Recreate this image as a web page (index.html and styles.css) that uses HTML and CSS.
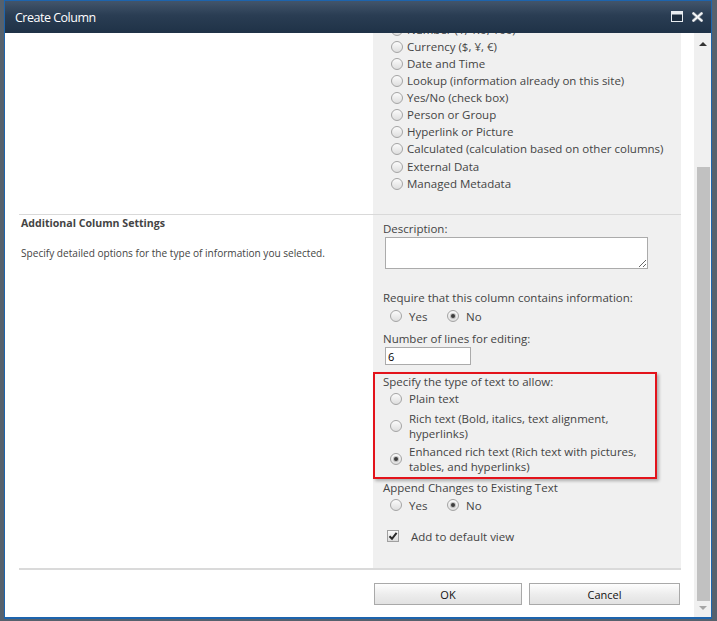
FILE: index.html
```html
<!DOCTYPE html>
<html lang="en">
<head>
<meta charset="utf-8">
<title>Create Column</title>
<link rel="stylesheet" href="styles.css">
</head>
<body>
<div class="dialog">
  <div class="titlebar">
    <span class="title">Create Column</span>
    <span class="tb-icons">
      <svg class="tb-max" width="12" height="11" viewBox="0 0 12 11"><rect x="0.5" y="0.5" width="11" height="10" fill="#1c2c3e" stroke="#e8ecf0"/><rect x="1" y="1" width="10" height="2.5" fill="#e8ecf0"/></svg>
      <svg class="tb-close" width="11" height="10" viewBox="0 0 11 10"><path d="M1.5 1.5 L9.5 8.5 M9.5 1.5 L1.5 8.5" stroke="#6d7884" stroke-width="3.6" stroke-linecap="square"/><path d="M1.5 1.5 L9.5 8.5 M9.5 1.5 L1.5 8.5" stroke="#f4f6f8" stroke-width="2" stroke-linecap="square"/></svg>
    </span>
  </div>
  <div class="body">
    <div class="content">
      <div class="section type-section">
        <div class="sec-left"></div>
        <div class="sec-right">
          <ul class="options">
            <li><input type="radio" class="radio" name="t">Number (1, 1.0, 100)</li>
            <li><input type="radio" class="radio" name="t">Currency ($, ¥, €)</li>
            <li><input type="radio" class="radio" name="t">Date and Time</li>
            <li><input type="radio" class="radio" name="t">Lookup (information already on this site)</li>
            <li><input type="radio" class="radio" name="t">Yes/No (check box)</li>
            <li><input type="radio" class="radio" name="t">Person or Group</li>
            <li><input type="radio" class="radio" name="t">Hyperlink or Picture</li>
            <li><input type="radio" class="radio" name="t">Calculated (calculation based on other columns)</li>
            <li class="gap"><input type="radio" class="radio" name="t">External Data</li>
            <li><input type="radio" class="radio" name="t">Managed Metadata</li>
          </ul>
        </div>
      </div>
      <div class="section settings">
        <div class="sec-left">
          <h3 class="sec-title">Additional Column Settings</h3>
          <p class="sec-desc">Specify detailed options for the type of information you selected.</p>
        </div>
        <div class="sec-right">
          <div class="label first">Description:</div>
          <textarea class="textarea"></textarea>
          <div class="label req">Require that this column contains information:</div>
          <div class="choice-row">
            <label class="choice"><input type="radio" class="radio" name="req">Yes</label>
            <label class="choice"><input type="radio" class="radio" name="req" checked>No</label>
          </div>
          <div class="label lines">Number of lines for editing:</div>
          <input type="text" class="textbox" value="6">
          <div class="highlight">
            <div class="label">Specify the type of text to allow:</div>
            <label class="opt opt-plain"><input type="radio" class="radio" name="tt"><span>Plain text</span></label>
            <label class="opt opt-rich"><input type="radio" class="radio" name="tt"><span>Rich text (Bold, italics, text alignment,<br>hyperlinks)</span></label>
            <label class="opt opt-enh"><input type="radio" class="radio" name="tt" checked><span>Enhanced rich text (Rich text with pictures,<br>tables, and hyperlinks)</span></label>
          </div>
          <div class="label append">Append Changes to Existing Text</div>
          <div class="choice-row append-row">
            <label class="choice"><input type="radio" class="radio" name="app">Yes</label>
            <label class="choice"><input type="radio" class="radio" name="app" checked>No</label>
          </div>
          <label class="check-row"><span class="checkbox"><svg width="10" height="10" viewBox="0 0 10 10"><path d="M1.5 5.2 L4 7.8 L8.6 1.8" fill="none" stroke="#2a2a2a" stroke-width="2"/></svg></span>Add to default view</label>
        </div>
      </div>
      <div class="footer">
        <button class="btn btn-ok">OK</button>
        <button class="btn btn-cancel">Cancel</button>
      </div>
    </div>
    <div class="scrollbar">
      <span class="arrow up"></span>
      <span class="thumb"></span>
      <span class="arrow down"></span>
    </div>
  </div>
</div>
</body>
</html>
```
FILE: styles.css
```css
* { box-sizing: border-box; }
html, body { margin: 0; padding: 0; }
body {
  background: #56616d;
  width: 717px;
  height: 621px;
  overflow: hidden;
  padding-left: 4px;
  font-family: "Open Sans", "Noto Sans", sans-serif;
  color: #444;
}
.dialog {
  width: 708px;
  height: 619px;
  border: 1px solid #1d64ad;
  border-bottom-width: 2px;
  background: #fff;
  display: flex;
  flex-direction: column;
  overflow: hidden;
}
.titlebar {
  height: 32px;
  flex: none;
  background: linear-gradient(#42556b, #2a3d53 45%, #1f3247);
  display: flex;
  align-items: center;
  justify-content: space-between;
  padding: 0 8px 0 10px;
}
.title {
  color: #fff;
  font-size: 12.5px;
  letter-spacing: -0.5px;
  padding-top: 1px;
}
.tb-icons { display: flex; align-items: center; gap: 9px; }
.tb-max { display: block; margin-top: -2px; }
.tb-close { display: block; margin-top: -1px; }
.body { flex: 1; display: flex; min-height: 0; }
.content {
  width: 689px;
  flex: none;
  overflow: hidden;
  padding-left: 14px;
}
.section {
  display: grid;
  grid-template-columns: 354px 308px;
}
.sec-right { background: #f0f0f0; }
.type-section {
  margin-top: -12px;
  border-bottom: 1px solid #d9d9d9;
  width: 662px;
}
.type-section .sec-right { padding: 0 0 22px 18px; }
.options { list-style: none; margin: 0; padding: 0; }
.options li {
  height: 17px;
  display: flex;
  align-items: center;
  font-size: 11.5px;
  white-space: nowrap;
}
.options li.gap { margin-top: 1px; }
.radio {
  appearance: none;
  -webkit-appearance: none;
  margin: 0 4px 0 0;
  width: 12px;
  height: 12px;
  flex: none;
  border-radius: 50%;
  border: 1px solid #a4a4a4;
  background: linear-gradient(#fbfbfb, #dedede);
  position: relative;
}
.radio:checked::after {
  content: "";
  position: absolute;
  left: 3px;
  top: 3px;
  width: 4px;
  height: 4px;
  border-radius: 50%;
  background: #3d3d3d;
  box-shadow: 0 0 0 1px rgba(60,60,60,0.25);
}
.settings .sec-left { padding-left: 2px; }
.sec-title {
  margin: 0;
  font-size: 10.6px;
  font-weight: bold;
  line-height: 16px;
  color: #444;
}
.sec-desc {
  margin: 14px 0 0;
  font-size: 10.1px;
  line-height: 16px;
}
.settings .sec-right { padding: 0 0 24px 10px; font-size: 11.5px; }
.label { line-height: 16px; white-space: nowrap; }
.label.first { margin-top: 6px; }
.textarea {
  display: block;
  margin: 0 0 0 2px;
  width: 263px;
  height: 32px;
  border: 1px solid #ababab;
  background: #fff;
  font: inherit;
}
.label.req { margin-top: 21px; }
.choice-row {
  margin-top: 2px;
  height: 16px;
  display: flex;
  align-items: center;
  padding-left: 7px;
}
.choice {
  display: inline-flex;
  align-items: center;
  width: 57px;
}
.choice .radio { margin-right: 7px; }
.label.lines { margin-top: 7px; }
.textbox {
  display: block;
  margin: 0 0 0 2px;
  width: 86px;
  height: 18px;
  border: 1px solid #ababab;
  padding: 0 2px;
  font: inherit;
  font-size: 11px;
  color: #000;
  background: #fff;
}
.highlight {
  margin: 7px 0 0 -10px;
  width: 284px;
  border: 2px solid #e3131b;
  box-shadow: 2px 2px 3px rgba(0,0,0,0.28);
  padding: 0 0 3.5px 8px;
}
.opt {
  display: flex;
  align-items: center;
  padding-left: 7px;
  line-height: 15px;
  white-space: nowrap;
}
.opt .radio { margin-right: 7px; }
.opt-plain { margin-top: 1px; line-height: 16px; }
.opt-rich { margin-top: 3.5px; }
.opt-enh { margin-top: 3px; }
.label.append { margin-top: 1px; }
.append-row { margin-top: 1px; }
.check-row {
  margin-top: 15px;
  height: 16px;
  display: flex;
  align-items: center;
  padding-left: 4px;
}
.checkbox {
  width: 12px;
  height: 12px;
  border: 1px solid #a0a0a0;
  background: linear-gradient(#fafafa, #dcdcdc);
  margin-right: 12px;
  display: flex;
  align-items: center;
  justify-content: center;
}
.checkbox svg { display: block; }
.footer {
  width: 662px;
  border-top: 2px solid #dadada;
  padding: 13px 1px 0 0;
  display: flex;
  justify-content: flex-end;
  gap: 7px;
}
.btn {
  height: 22px;
  border: 1px solid #a9a9a9;
  background: linear-gradient(#fdfdfd, #ececec 55%, #e2e2e2);
  font-family: "Open Sans", "Noto Sans", sans-serif;
  font-size: 11px;
  color: #111;
  padding: 0;
  margin: 0;
}
.btn-ok { width: 148px; }
.btn-cancel { width: 151px; }
.scrollbar {
  width: 17px;
  flex: none;
  background: #f0f0f0;
  display: flex;
  flex-direction: column;
  align-items: center;
  padding-top: 9px;
}
.arrow {
  width: 0;
  height: 0;
  border-left: 4px solid transparent;
  border-right: 4px solid transparent;
}
.arrow.up { border-bottom: 4px solid #333; }
.thumb {
  width: 13px;
  height: 434px;
  margin-top: 121px;
  margin-left: 1px;
  background: #c1c1c1;
}
.arrow.down { border-top: 4px solid #a6a6a6; margin-top: 5px; }
```
